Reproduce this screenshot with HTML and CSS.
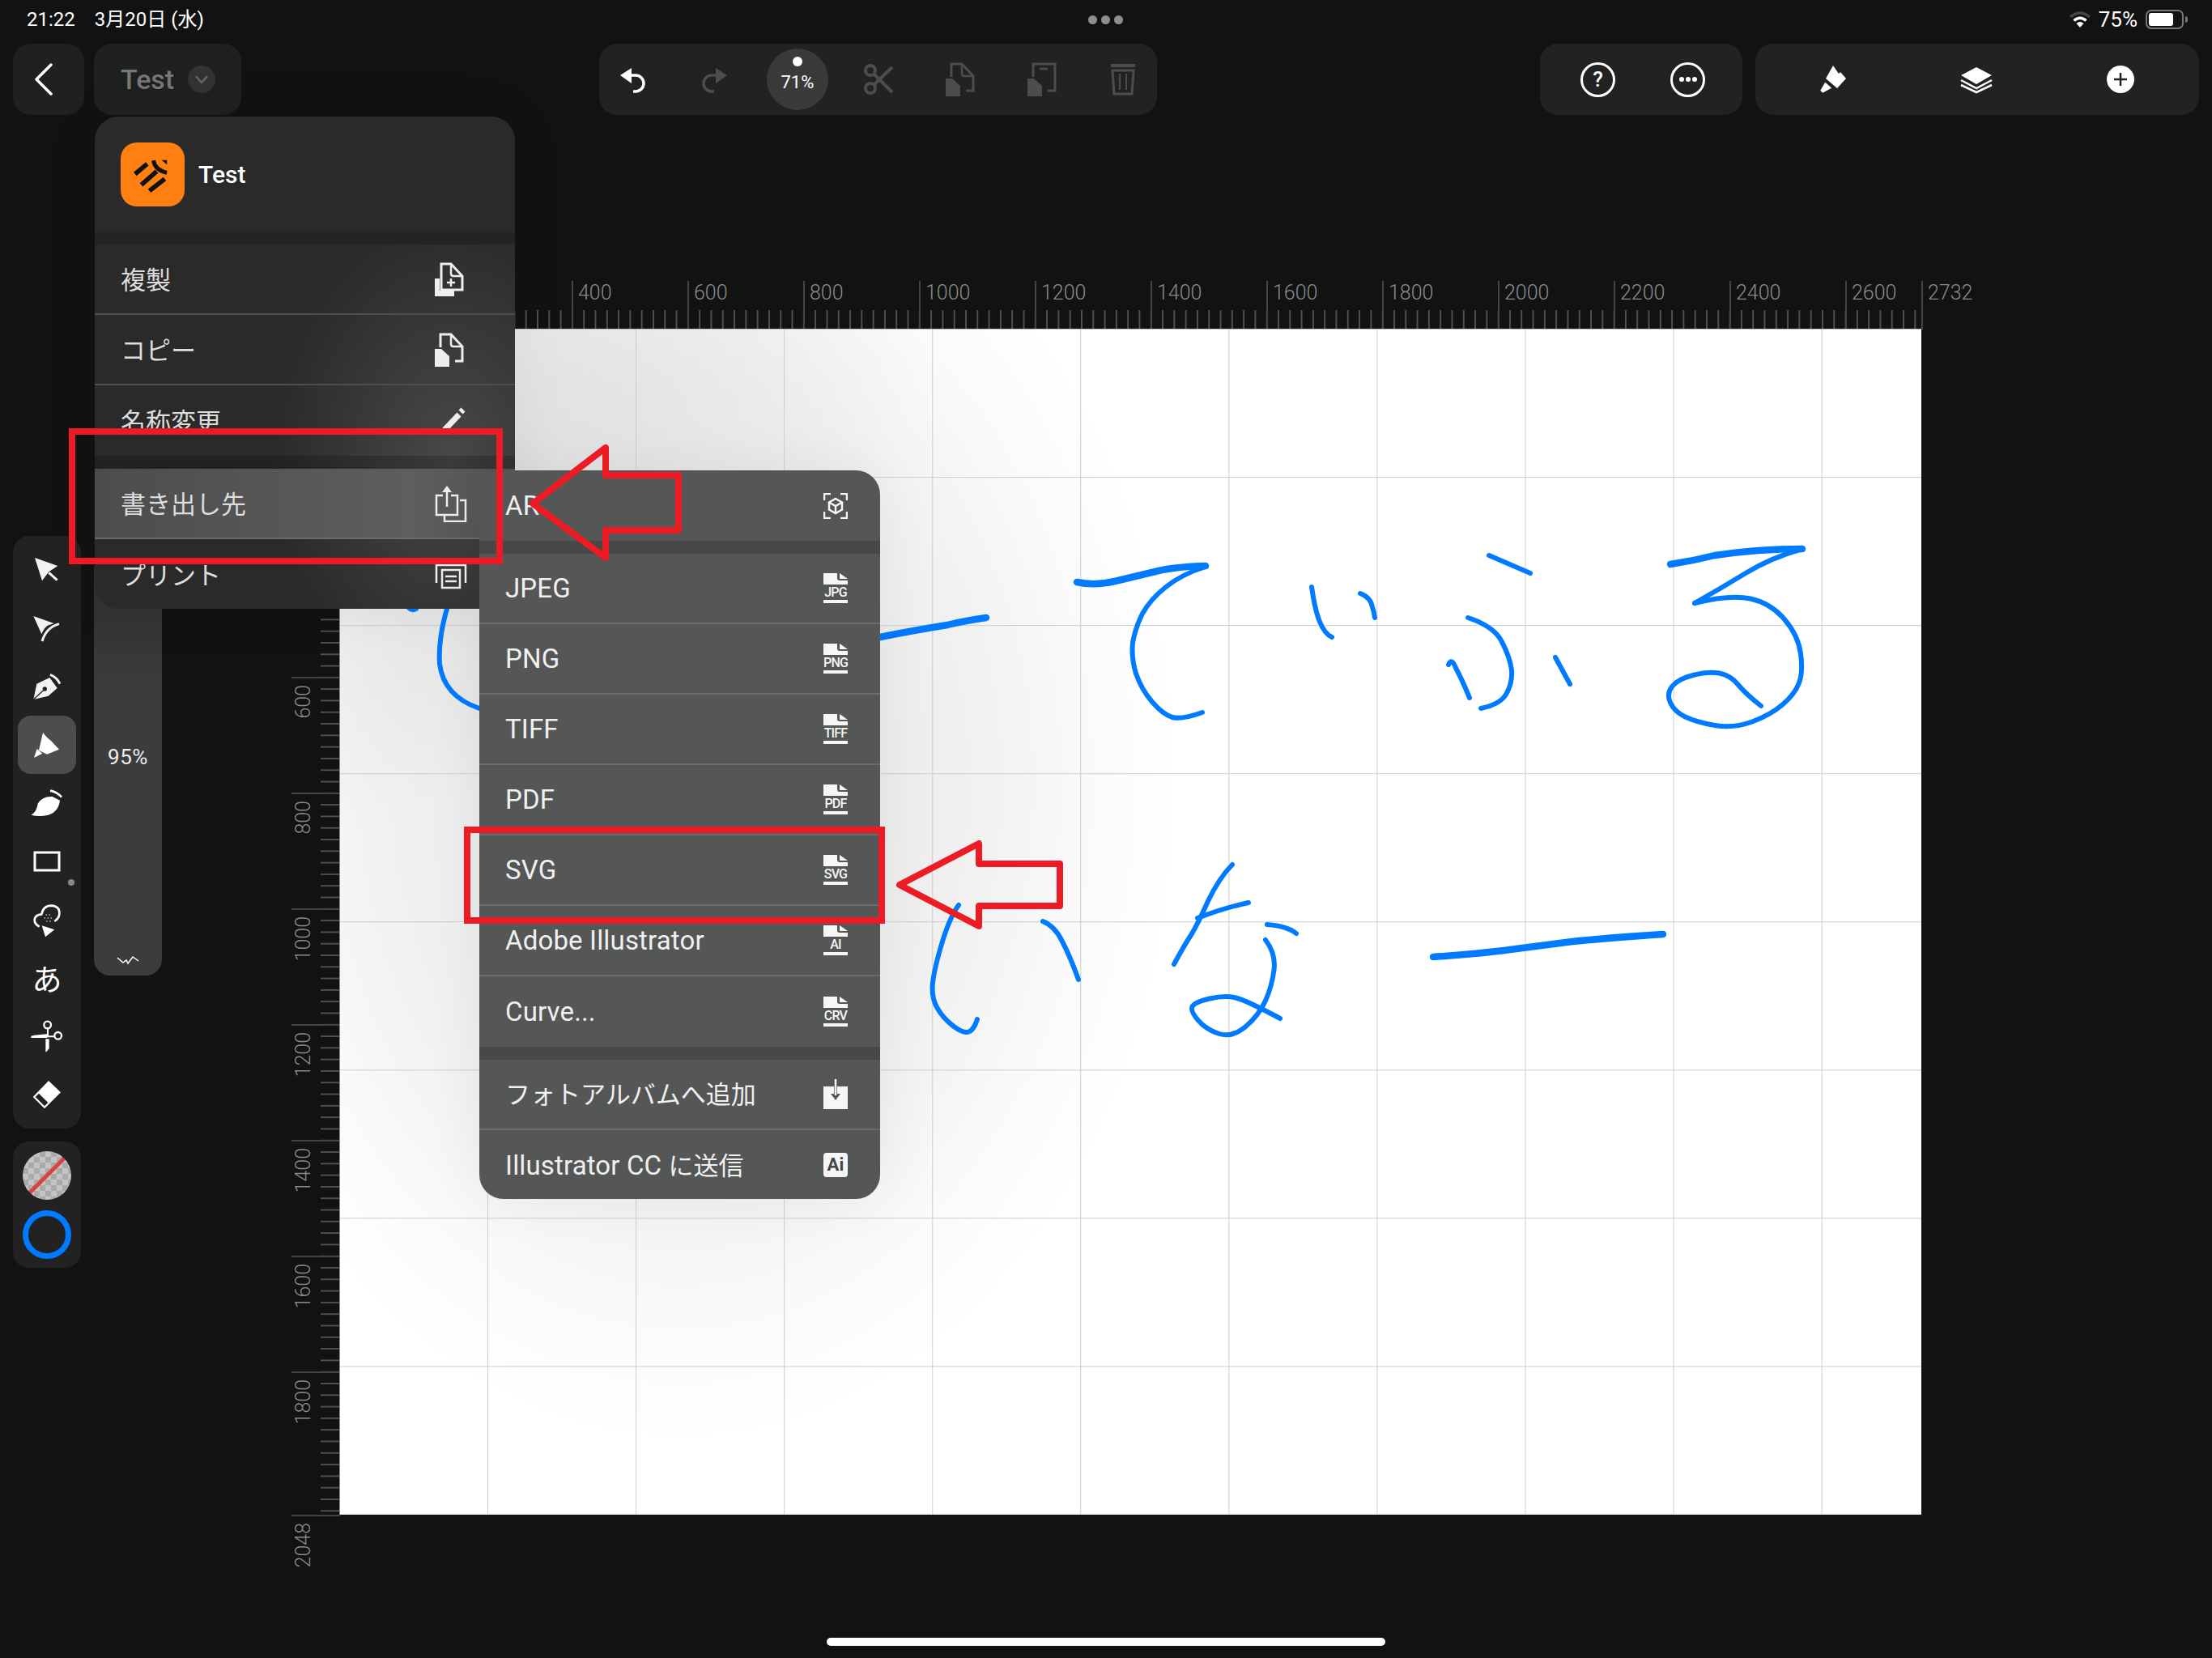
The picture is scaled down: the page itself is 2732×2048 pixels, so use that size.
FILE: index.html
```html
<!DOCTYPE html>
<html lang="ja">
<head>
  <meta charset="UTF-8" />
  <title>Test</title>
  <link rel="stylesheet" href="styles.css">
</head>
<body>

  <svg class="defs" aria-hidden="true">
    <symbol id="i-copy" viewBox="0 0 36 42">
      <path d="M7 18V2H20L34 17V35H25" fill="none" stroke="currentColor" stroke-width="3"/>
      <path d="M20 3V14Q20 17 23 17H33" fill="none" stroke="currentColor" stroke-width="2.500"/>
      <path d="M0 20H8L18 29V42H0Z" fill="currentColor"/>
    </symbol>
    <symbol id="i-page" viewBox="0 0 30 14">
      <path d="M0 0H17V6Q17 9 20 9H30V14H0Z" fill="#f6f6f6"/>
      <path d="M20 0L30 7H20Z" fill="#f6f6f6"/>
    </symbol>
  </svg>

  <header class="status">
    <div class="status-time"><span>21:22</span><span>3月20日 (水)</span></div>
    <div class="status-dots"><i></i><i></i><i></i></div>
    <div class="status-right">
      <svg width="26" height="20" viewBox="0 0 26 20">
        <path d="M1 7Q13 -3 25 7" fill="none" stroke="#444" stroke-width="3.5"/>
        <path d="M5.5 11.5Q13 5 20.5 11.5" fill="none" stroke="#fff" stroke-width="3.5"/>
        <path d="M13 20L8.500 15Q13 11 17.500 15Z" fill="#fff"/>
      </svg>
      <span>75%</span>
      <div class="battery"><div class="battery-fill"></div></div>
    </div>
  </header>

  <nav class="topbar">
    <button class="bar-group back" type="button">
      <svg width="26" height="40" viewBox="0 0 26 40"><path d="M22 2L4 20L22 38" fill="none" stroke="#fff" stroke-width="3.500" stroke-linecap="round" stroke-linejoin="round"/></svg>
    </button>
    <button class="bar-group doc" type="button">
      <span>Test</span>
      <span class="doc-chev"><svg width="16" height="10" viewBox="0 0 16 10"><path d="M1 1L8 9L15 1" fill="none" stroke="#666" stroke-width="2.500"/></svg></span>
    </button>

    <div class="bar-group history">
      <span class="bar-icon on">
        <svg width="40" height="40" viewBox="0 0 40 40"><path d="M4 15L18 6V25Z" fill="currentColor"/><path d="M16 15H23A10 10 0 0 1 23 35H20" fill="none" stroke="currentColor" stroke-width="3.500"/></svg>
      </span>
      <span class="bar-icon">
        <svg width="40" height="40" viewBox="0 0 40 40"><path d="M36 15L22 6V25Z" fill="currentColor"/><path d="M24 15H17A10 10 0 0 0 17 35H20" fill="none" stroke="currentColor" stroke-width="3.500"/></svg>
      </span>
      <span class="zoom-pill"><i></i>71%</span>
      <span class="bar-icon">
        <svg width="40" height="40" viewBox="0 0 40 40" fill="none" stroke="currentColor" stroke-width="4"><circle cx="10" cy="9" r="6"/><circle cx="10" cy="31" r="6"/><path d="M14 13L37 36M14 27L37 5"/></svg>
      </span>
      <span class="bar-icon"><svg width="36" height="42"><use href="#i-copy"/></svg></span>
      <span class="bar-icon">
        <svg width="36" height="42" viewBox="0 0 36 42"><path d="M7 18V2H34V35H25" fill="none" stroke="currentColor" stroke-width="3"/><path d="M15 8H25" stroke="currentColor" stroke-width="2.500"/><path d="M0 20H8L18 29V42H0Z" fill="currentColor"/></svg>
      </span>
      <span class="bar-icon">
        <svg width="32" height="40" viewBox="0 0 32 40" fill="none" stroke="currentColor" stroke-width="3"><path d="M1 3H31" stroke-width="4"/><path d="M3 9H29L27 38H5Z"/><path d="M12 13V33M20 13V33" stroke-width="2"/></svg>
      </span>
    </div>

    <div class="bar-group help">
      <span class="ring">?</span>
      <span class="ring"><svg width="24" height="8" viewBox="0 0 24 8" fill="#fff"><circle cx="4" cy="4" r="3"/><circle cx="12" cy="4" r="3"/><circle cx="20" cy="4" r="3"/></svg></span>
    </div>

    <div class="bar-group panels">
      <span class="bar-icon on">
        <svg width="40" height="40" viewBox="0 0 40 40" fill="#fff"><path d="M21 3L28 13L30 11L37 19L26 31L12 19Z"/><path d="M11 22L21 31L8 38L4 34Z" stroke="#222" stroke-width="2"/></svg>
      </span>
      <span class="bar-icon on">
        <svg width="40" height="40" viewBox="0 0 40 40"><path d="M20 5L39 15L20 26L1 15Z" fill="#fff"/><path d="M1 21L20 31L39 21M1 27L20 36L39 27" fill="none" stroke="#fff" stroke-width="2.500"/></svg>
      </span>
      <span class="bar-icon on">
        <svg width="34" height="34" viewBox="0 0 34 34"><circle cx="17" cy="17" r="17" fill="#fff"/><path d="M17 9V25M9 17H25" stroke="#222" stroke-width="2.500"/></svg>
      </span>
    </div>
  </nav>

  <main class="workspace">
    <aside class="rail">
      <div class="rail-panel tools">
        <div class="tool">
          <svg viewBox="0 0 120 120"><path d="M15 15L100 45L67 67L42 100Z" fill="#f2f2f2"/><path d="M67 70L98 98" stroke="#f2f2f2" stroke-width="9"/></svg>
        </div>
        <div class="tool">
          <svg viewBox="0 0 120 120"><path d="M10 15L86 42L62 50Q48 60 40 82Z" fill="#f2f2f2"/><path d="M105 44Q58 56 42 108" fill="none" stroke="#f2f2f2" stroke-width="9"/></svg>
        </div>
        <div class="tool">
          <svg viewBox="0 0 120 120"><path d="M10 108L22 50L70 27L98 66L65 95Z" fill="#f2f2f2"/><path d="M10 108L50 71" stroke="#222" stroke-width="4"/><circle cx="52" cy="69" r="8" fill="#222"/><path d="M72 16Q97 26 108 50" fill="none" stroke="#f2f2f2" stroke-width="9"/></svg>
        </div>
        <div class="tool tool-on">
          <svg viewBox="0 0 120 120"><path d="M45 15Q60 35 75 45L105 77Q85 85 60 95Q45 88 30 80Z" fill="#fff"/><path d="M12 108L23 75L43 92Z" fill="#fff"/></svg>
        </div>
        <div class="tool">
          <svg viewBox="0 0 120 120"><path d="M2 104Q22 92 26 62Q42 34 80 36L108 50Q103 92 65 104Q30 112 2 104Z" fill="#fff"/><path d="M72 14Q96 18 114 38" fill="none" stroke="#fff" stroke-width="8"/></svg>
        </div>
        <div class="tool tool-more">
          <svg viewBox="0 0 120 120"><rect x="15" y="27" width="90" height="66" fill="none" stroke="#fff" stroke-width="9"/></svg>
        </div>
        <div class="tool">
          <svg viewBox="0 0 120 120"><path d="M32 86Q13 76 14 60Q16 42 40 40Q46 8 76 8Q108 10 106 38Q105 55 88 66" fill="none" stroke="#fff" stroke-width="8"/><path d="M41 82L88 97L54 124Z" fill="#fff"/><path d="M56 42h3M68 42h3M50 54h3M62 54h3M74 54h3M58 66h3M70 66h3" stroke="#fff" stroke-width="5"/></svg>
        </div>
        <div class="tool tool-glyph">あ</div>
        <div class="tool">
          <svg viewBox="0 0 120 120" fill="#fff"><circle cx="62" cy="18" r="13" fill="none" stroke="#fff" stroke-width="7"/><circle cx="101" cy="58" r="13" fill="none" stroke="#fff" stroke-width="7"/><path d="M1 59Q25 54 60 52V66H1Z"/><path d="M60 28H66V58H88V64H60Z"/><path d="M55 70H68V105L58 118H55Z"/></svg>
        </div>
        <div class="tool">
          <svg viewBox="0 0 120 120"><path d="M66 9L111 52L51 112L8 69Z" fill="#fff"/><path d="M17 69L30 56L64 90L51 103Z" fill="#222"/></svg>
        </div>
      </div>
      <div class="rail-panel colors">
        <div class="swatch-fill"></div>
        <div class="swatch-stroke"></div>
      </div>
    </aside>

    <div class="ruler-h">
      <span>0</span><span>200</span><span>400</span><span>600</span><span>800</span><span>1000</span><span>1200</span><span>1400</span><span>1600</span><span>1800</span><span>2000</span><span>2200</span><span>2400</span><span class="ruler-short">2600</span><span class="ruler-end">2732</span>
    </div>

    <div class="ruler-v">
      <span><b>0</b></span><span><b>200</b></span><span><b>400</b></span><span><b>600</b></span><span><b>800</b></span><span><b>1000</b></span><span><b>1200</b></span><span><b>1400</b></span><span><b>1600</b></span><span class="ruler-long"><b>1800</b></span><span class="ruler-end"><b>2048</b></span>
    </div>

    <div class="canvas">
      <svg class="ink" viewBox="420 407 1953 1464" width="1953" height="1464">
        <g stroke-width="6">
          <path d="M552 752Q541 790 543 820Q548 860 592 875"/>
          <path d="M505 751Q509 755 514 752"/>
          <path d="M1489 700Q1460 709 1440 725Q1421 740 1411 758Q1402 776 1399 794Q1397 812 1403 832Q1410 852 1423 867Q1437 883 1448 886Q1460 889 1485 880"/>
          <path d="M1620 725Q1624 754 1630 768Q1636 783 1645 787"/>
          <path d="M1680 733Q1693 738 1695 750Q1697 755 1698 763"/>
          <path d="M1839 686L1890 708"/>
          <path d="M1813 763Q1846 774 1855 793Q1865 812 1867 828Q1868 843 1861 856Q1854 870 1829 875"/>
          <path d="M1789 821Q1793 812 1798 825Q1806 840 1815 862"/>
          <path d="M1921 812L1939 845"/>
          <path d="M2226 678Q2187 689 2156 708Q2125 727 2093 745"/>
          <path d="M2093 745Q2137 734 2162 739.500Q2187 745 2204 765Q2221 785 2224 807.500Q2227 830 2222 843.500Q2217 857 2202 870Q2187 883 2164 891.500Q2141 900 2118 896Q2095 892 2081.500 885.500Q2068 879 2063 868Q2058 857 2065 848Q2072 839 2091 834Q2110 829 2123.500 831.500Q2137 834 2146.500 845.500Q2156 857 2175 872"/>
          <path d="M1184 1118Q1173 1133 1163.500 1164.500Q1154 1196 1152 1214Q1150 1232 1157.500 1245Q1165 1258 1177.500 1267.500Q1190 1277 1196.500 1274.500Q1203 1272 1207 1259"/>
          <path d="M1288 1138Q1303 1144 1312 1163Q1322 1182 1332 1210"/>
          <path d="M1522 1068Q1506 1084 1492 1113Q1479 1142 1471 1155Q1463 1167 1450 1191"/>
          <path d="M1479 1134Q1513 1121 1542 1115"/>
          <path d="M1565 1142Q1590 1144 1601 1153"/>
          <path d="M1563 1161Q1576 1178 1573.500 1198Q1571 1218 1563 1236Q1555 1254 1538.500 1268Q1522 1282 1506 1277Q1490 1272 1480 1260.500Q1470 1249 1472.500 1243.500Q1475 1238 1494 1233.500Q1513 1229 1526.500 1232.500Q1540 1236 1581 1258"/>
        </g>
        <g stroke-width="8.500">
          <path d="M1087 787Q1121 780 1170 772Q1190 767 1218 763"/>
          <path d="M1330 719Q1352 724 1379 717.500Q1406 711 1429 705.500Q1452 700 1489 699"/>
          <path d="M2063 697Q2090 693 2118 686Q2171 678 2226 678"/>
          <path d="M1770 1182Q1827 1178 1865 1173Q1903 1168 1942 1163Q1980 1159 2054 1154"/>
        </g>
      </svg>
    </div>
  </main>

  <div class="home-bar"></div>

  <!-- popovers and annotations on top of the page -->
  <div class="slider">
    <span class="slider-value">95%</span>
    <svg width="28" height="14" viewBox="0 0 28 14"><path d="M1 4L8 10L12 7L14 11L20 3L27 8" fill="none" stroke="#fff" stroke-width="1.500"/></svg>
  </div>

  <section class="menu">
    <div class="menu-head">
      <div class="app-icon">
        <svg width="79" height="79" viewBox="28 18 234 237">
          <path d="M80 135L125 97M103 175L160 125M133 197L190 153" stroke="#111" stroke-width="17" fill="none"/>
          <path d="M148 85Q155 122 198 130" stroke="#111" stroke-width="15" fill="none"/>
          <path d="M178 83L198 83L198 100Z" fill="#111"/>
        </svg>
      </div>
      <span>Test</span>
    </div>
    <div class="menu-gap"></div>
    <div class="row">
      <span>複製</span>
      <svg class="row-icon" width="40" height="42" viewBox="0 0 40 42" fill="none" stroke="#eee"><path d="M0 20H6V35H24V42H0Z" fill="#eee" stroke="none"/><path d="M8 34V2H20L34 17V34Z" stroke-width="3"/><path d="M20 3V14Q20 17 23 17H33" stroke-width="2.500"/><path d="M20 20V30M15 25H25" stroke-width="2.500"/></svg>
    </div>
    <div class="row">
      <span>コピー</span>
      <svg class="row-icon" width="40" height="42"><use href="#i-copy" width="36" height="42"/></svg>
    </div>
    <div class="row row-last">
      <span>名称変更</span>
      <svg class="row-icon" width="40" height="42" viewBox="0 0 40 42"><path d="M12 32L30 13" stroke="#eee" stroke-width="7"/><path d="M32 10L35 7" stroke="#eee" stroke-width="7"/></svg>
    </div>
    <div class="menu-gap menu-gap-sm"></div>
    <div class="row row-on">
      <span>書き出し先</span>
      <svg class="row-icon" width="40" height="46" viewBox="0 0 40 46" fill="none" stroke="#eee" stroke-width="2.500"><path d="M10 13H2V37H28V13H20"/><path d="M15 27V3"/><path d="M9 9L15 1L21 9Z" fill="#eee" stroke="none"/><path d="M31 19H38V45H12V38"/></svg>
    </div>
    <div class="row row-last">
      <span>プリント</span>
      <svg class="row-icon" width="40" height="36" viewBox="0 0 40 36" fill="none" stroke="#eee" stroke-width="2.500"><path d="M2 28V6H38V28"/><rect x="9" y="12" width="22" height="22"/><path d="M13 20H27M13 26H27"/></svg>
    </div>
  </section>

  <section class="submenu">
    <div class="sub-row sub-last">
      <span>AR</span>
      <svg width="30" height="32" viewBox="0 0 30 32" fill="none" stroke="#f6f6f6" stroke-width="2.500"><path d="M1 9V1H9M21 1H29V9M1 23V31H9M21 31H29V23"/><path d="M15 7L23 11.500V20.500L15 25L7 20.500V11.500Z"/><path d="M7 11.500L15 16L23 11.500M15 16V25"/></svg>
    </div>
    <div class="sub-gap"></div>
    <div class="sub-row"><span>JPEG</span><div class="file-icon"><svg width="30" height="14"><use href="#i-page"/></svg><small>JPG</small></div></div>
    <div class="sub-row"><span>PNG</span><div class="file-icon"><svg width="30" height="14"><use href="#i-page"/></svg><small>PNG</small></div></div>
    <div class="sub-row"><span>TIFF</span><div class="file-icon"><svg width="30" height="14"><use href="#i-page"/></svg><small>TIFF</small></div></div>
    <div class="sub-row"><span>PDF</span><div class="file-icon"><svg width="30" height="14"><use href="#i-page"/></svg><small>PDF</small></div></div>
    <div class="sub-row"><span>SVG</span><div class="file-icon"><svg width="30" height="14"><use href="#i-page"/></svg><small>SVG</small></div></div>
    <div class="sub-row"><span>Adobe Illustrator</span><div class="file-icon"><svg width="30" height="14"><use href="#i-page"/></svg><small>AI</small></div></div>
    <div class="sub-row sub-last"><span>Curve...</span><div class="file-icon"><svg width="30" height="14"><use href="#i-page"/></svg><small>CRV</small></div></div>
    <div class="sub-gap"></div>
    <div class="sub-row">
      <span class="cjk">フォトアルバムへ追加</span>
      <svg width="30" height="37" viewBox="0 0 30 37"><path d="M0 9H13V18H9L15 26L21 18H17V9H30V37H0Z" fill="#f6f6f6"/><path d="M15 0V20" stroke="#f6f6f6" stroke-width="2.500"/></svg>
    </div>
    <div class="sub-row sub-last">
      <span>Illustrator CC <span class="cjk">に送信</span></span>
      <div class="ai-badge">Ai</div>
    </div>
  </section>

  <div class="mark mark-export"></div>
  <div class="mark mark-svg"></div>
  <svg class="arrows" width="2732" height="2048" viewBox="0 0 2732 2048">
    <path d="M658 622L748 553V587H838V655H748V689Z"/>
    <path d="M1111 1093L1209 1042V1067H1309V1119H1209V1144Z"/>
  </svg>

</body>
</html>
```

FILE: styles.css
```css
* {
  box-sizing: border-box;
}

html, body {
  margin: 0;
  height: 100%;
}

body {
  position: relative;
  display: flex;
  flex-direction: column;
  width: 2732px;
  height: 2048px;
  overflow: hidden;
  background: #121212;
  color: #fff;
  font-family: Roboto, "Noto Sans CJK JP", sans-serif;
}

.defs {
  position: absolute;
  width: 0;
  height: 0;
}

/* status bar */
.status {
  display: grid;
  grid-template-columns: 1fr auto 1fr;
  align-items: center;
  height: 54px;
  padding: 0 35px 6px 33px;
  font-size: 24px;
  line-height: 32px;
}

.status-time {
  display: flex;
  align-items: baseline;
  gap: 24px;
}

.status-dots {
  display: flex;
  gap: 5px;
}

.status-dots i {
  width: 11px;
  height: 11px;
  border-radius: 50%;
  background: #8e8e8e;
}

.status-right {
  display: flex;
  justify-content: flex-end;
  align-items: center;
  gap: 10px;
  font-size: 26px;
}

.battery {
  position: relative;
  width: 47px;
  height: 24px;
  padding: 2px;
  border: 2px solid #777;
  border-radius: 7px;
}

.battery::after {
  content: "";
  position: absolute;
  right: -7px;
  top: 6px;
  width: 3px;
  height: 8px;
  border-radius: 0 3px 3px 0;
  background: #777;
}

.battery-fill {
  width: 30px;
  height: 16px;
  border-radius: 3px;
  background: #fff;
}

/* top bar */
.topbar {
  display: flex;
  height: 88px;
  padding: 0 16px;
}

.bar-group {
  display: flex;
  align-items: center;
  height: 88px;
  border: none;
  border-radius: 22px;
  background: #222;
  color: #4d4d4d;
  font-family: inherit;
}

.back {
  justify-content: center;
  width: 88px;
  padding: 0 12px 0 0;
  margin-right: 12px;
  background: #1f2020;
}

.doc {
  width: 182px;
  padding: 0 0 0 33px;
  gap: 17px;
  background: #1f2020;
  color: #777;
  font-size: 34px;
  font-weight: 500;
}

.doc-chev {
  display: flex;
  align-items: center;
  justify-content: center;
  width: 34px;
  height: 34px;
  border-radius: 50%;
  background: #333;
}

.history {
  width: 689px;
  margin-left: 442px;
  padding: 0 16px;
  gap: 49px;
}

.bar-icon {
  display: flex;
  align-items: center;
  justify-content: center;
  width: 52px;
  height: 52px;
}

.bar-icon.on {
  color: #fff;
}

.zoom-pill {
  display: flex;
  flex-direction: column;
  align-items: center;
  gap: 9px;
  width: 76px;
  height: 76px;
  margin: 0 -12px 0 -10px;
  padding-top: 10px;
  border-radius: 50%;
  background: #3a3a3a;
  color: #fff;
  font-size: 22px;
  line-height: 22px;
}

.zoom-pill i {
  width: 12px;
  height: 12px;
  border-radius: 50%;
  background: #fff;
}

.help {
  width: 250px;
  margin-left: auto;
  padding-left: 50px;
  gap: 68px;
}

.ring {
  display: flex;
  align-items: center;
  justify-content: center;
  width: 43px;
  height: 43px;
  border: 3px solid #fff;
  border-radius: 50%;
  color: #fff;
  font-size: 26px;
  font-weight: 500;
}

.panels {
  width: 548px;
  margin-left: 16px;
  padding-left: 69px;
  gap: 126px;
}

/* work area: rail, rulers, canvas */
.workspace {
  flex: 1;
  display: grid;
  grid-template-columns: 360px 60px 1953px;
  grid-template-rows: 60px 1464px;
  padding-top: 205px;
}

.rail {
  grid-row: 1 / 3;
  padding: 315px 0 0 16px;
}

.rail-panel {
  width: 84px;
  border-radius: 20px;
  background: #222;
}

.tools {
  display: flex;
  flex-direction: column;
  align-items: center;
  padding: 6px 0;
}

.tool {
  position: relative;
  display: flex;
  align-items: center;
  justify-content: center;
  width: 72px;
  height: 72px;
  color: #fff;
}

.tool svg {
  width: 40px;
  height: 40px;
  overflow: visible;
}

.tool-on {
  border-radius: 16px;
  background: #4c4d4d;
}

.tool-more::after {
  content: "";
  position: absolute;
  right: 2px;
  bottom: 6px;
  width: 8px;
  height: 8px;
  border-radius: 50%;
  background: #888;
}

.tool-glyph {
  font-size: 37px;
  font-family: "Noto Sans CJK JP", sans-serif;
}

.colors {
  display: flex;
  flex-direction: column;
  align-items: center;
  gap: 13px;
  height: 156px;
  margin-top: 16px;
  padding-top: 12px;
}

.swatch-fill {
  width: 60px;
  height: 60px;
  border-radius: 50%;
  background:
    linear-gradient(135deg, transparent 47%, #d94444 47%, #d94444 53%, transparent 53%),
    repeating-conic-gradient(#aaa 0 25%, #c4c4c4 0 50%) 0 0 / 14px 14px;
}

.swatch-stroke {
  width: 60px;
  height: 60px;
  border: 7px solid #007aff;
  border-radius: 50%;
}

.ruler-h {
  grid-column: 3;
  grid-row: 1;
  display: flex;
  background: linear-gradient(90deg, #505050 1.500px, transparent 0) left bottom / 14.300px 24px repeat-x;
}

.ruler-h span {
  flex: none;
  width: 143px;
  padding-left: 6px;
  border-left: 2px solid #444;
  color: #8a8a8a;
  font-size: 25px;
  font-weight: 300;
  line-height: 30px;
}

.ruler-h .ruler-short {
  width: 94px;
}

.ruler-h .ruler-end {
  width: 80px;
  height: 60px;
}

.ruler-v {
  grid-column: 2;
  grid-row: 2;
  display: flex;
  flex-direction: column;
  background: linear-gradient(180deg, #505050 1.500px, transparent 0) right top / 24px 14.300px repeat-y;
}

.ruler-v span {
  flex: none;
  height: 143px;
  padding: 8px 0 0;
  border-top: 2px solid #444;
}

.ruler-v .ruler-long {
  height: 177px;
}

.ruler-v b {
  display: block;
  width: 30px;
  writing-mode: vertical-rl;
  transform: rotate(180deg);
  color: #8a8a8a;
  font-size: 25px;
  font-weight: 300;
  line-height: 30px;
}

.canvas {
  grid-column: 3;
  grid-row: 2;
  position: relative;
  background-color: #fff;
  background-image:
    linear-gradient(90deg, transparent 182.300px, #ccc 182.300px),
    linear-gradient(180deg, transparent 182.300px, #ccc 182.300px),
    radial-gradient(ellipse 620px 820px at 420px 560px, rgba(0, 0, 0, 0.075) 0 40%, rgba(0, 0, 0, 0.055) 60%, rgba(0, 0, 0, 0.02) 82%, transparent),
    radial-gradient(ellipse 760px 560px at -40px 43px, rgba(0, 0, 0, 0.065) 0 40%, rgba(0, 0, 0, 0.04) 62%, rgba(0, 0, 0, 0.015) 84%, transparent);
  background-size: 183.070px 183.070px, 183.070px 183.070px, auto, auto;
  box-shadow: 0 -1px 0 #bbb, -1px 0 0 #888;
}

.ink {
  position: absolute;
  left: 0;
  top: 0;
}

.ink path {
  fill: none;
  stroke: #007aff;
  stroke-linecap: round;
  stroke-linejoin: round;
}

.home-bar {
  flex: none;
  width: 690px;
  height: 10px;
  margin: 0 auto 15px;
  border-radius: 5px;
  background: #fff;
}

/* slider popover */
.slider {
  position: absolute;
  left: 116px;
  top: 700px;
  display: flex;
  flex-direction: column;
  align-items: center;
  width: 84px;
  height: 505px;
  padding-top: 220px;
  border-radius: 0 0 20px 20px;
  background: linear-gradient(180deg, #2e2e2e, #3c3c3c 30%);
  color: #eee;
  font-size: 26px;
  letter-spacing: 0.5px;
}

.slider svg {
  margin-top: 229px;
}

/* document menu */
.menu {
  position: absolute;
  left: 117px;
  top: 144px;
  width: 519px;
  height: 608px;
  overflow: hidden;
  border-radius: 30px;
  background:
    radial-gradient(ellipse 220px 300px at 440px 420px, #484848, transparent),
    #2a2a2a;
  color: #ddd;
  font-size: 31px;
  box-shadow: 0 0 70px rgba(0, 0, 0, 0.06);
}

.menu-head {
  display: flex;
  align-items: center;
  gap: 17px;
  height: 143px;
  padding: 0 32px 0 32px;
  background: #2a2a2a;
  color: #fff;
  font-size: 30px;
  font-weight: 500;
}

.app-icon {
  display: flex;
  width: 79px;
  height: 79px;
  border-radius: 20px;
  background: #ff8010;
}

.menu-gap {
  height: 15px;
  background: #242424;
}

.menu-gap-sm {
  height: 16px;
  background: rgba(0, 0, 0, 0.18);
}

.row {
  display: flex;
  align-items: center;
  justify-content: space-between;
  height: 87px;
  padding: 0 59px 0 32px;
  border-bottom: 2px solid #4e4e4e;
}

.row > span {
  margin-bottom: 3px;
}

.row-last {
  border-bottom: none;
}

.row-on {
  background: linear-gradient(90deg, #4c4c4c, #5d5e5d 75%, #535353);
  border-bottom-color: #6a6a6a;
}

.row-icon {
  color: #eee;
}

/* export submenu */
.submenu {
  position: absolute;
  left: 592px;
  top: 581px;
  width: 495px;
  height: 900px;
  overflow: hidden;
  border-radius: 30px;
  background: #555656;
  color: #f0f0f0;
  font-size: 33px;
  letter-spacing: 0.15px;
  box-shadow: 0 0 70px rgba(0, 0, 0, 0.06);
}

.sub-row {
  display: flex;
  align-items: center;
  justify-content: space-between;
  height: 87px;
  padding: 0 40px 0 32px;
  border-bottom: 2px solid #6c6c6c;
}

.sub-last {
  border-bottom: none;
}

.sub-gap {
  height: 16px;
  background: #484848;
}

.cjk {
  font-size: 31px;
  letter-spacing: 0;
}

.sub-row > .cjk,
.sub-row > span:has(.cjk) {
  margin-bottom: 4px;
}

.file-icon {
  display: flex;
  flex-direction: column;
  align-items: center;
  width: 30px;
  height: 37px;
  border-bottom: 4px solid #f6f6f6;
}

.file-icon svg {
  flex: none;
}

.file-icon small {
  color: #f6f6f6;
  font-size: 16px;
  font-weight: 500;
  line-height: 19px;
  letter-spacing: -0.8px;
}

.ai-badge {
  width: 30px;
  height: 30px;
  margin-bottom: 2px;
  border-radius: 4px;
  background: #f6f6f6;
  color: #444;
  font-size: 22px;
  font-weight: 700;
  line-height: 30px;
  text-align: center;
}

/* red annotations */
.mark {
  position: absolute;
  border: 8px solid #ed1c24;
}

.mark-export {
  left: 85px;
  top: 529px;
  width: 536px;
  height: 168px;
}

.mark-svg {
  left: 573px;
  top: 1021px;
  width: 520px;
  height: 120px;
}

.arrows {
  position: absolute;
  left: 0;
  top: 0;
}

.arrows path {
  fill: none;
  stroke: #ed1c24;
  stroke-width: 8;
  stroke-linejoin: round;
}
```
